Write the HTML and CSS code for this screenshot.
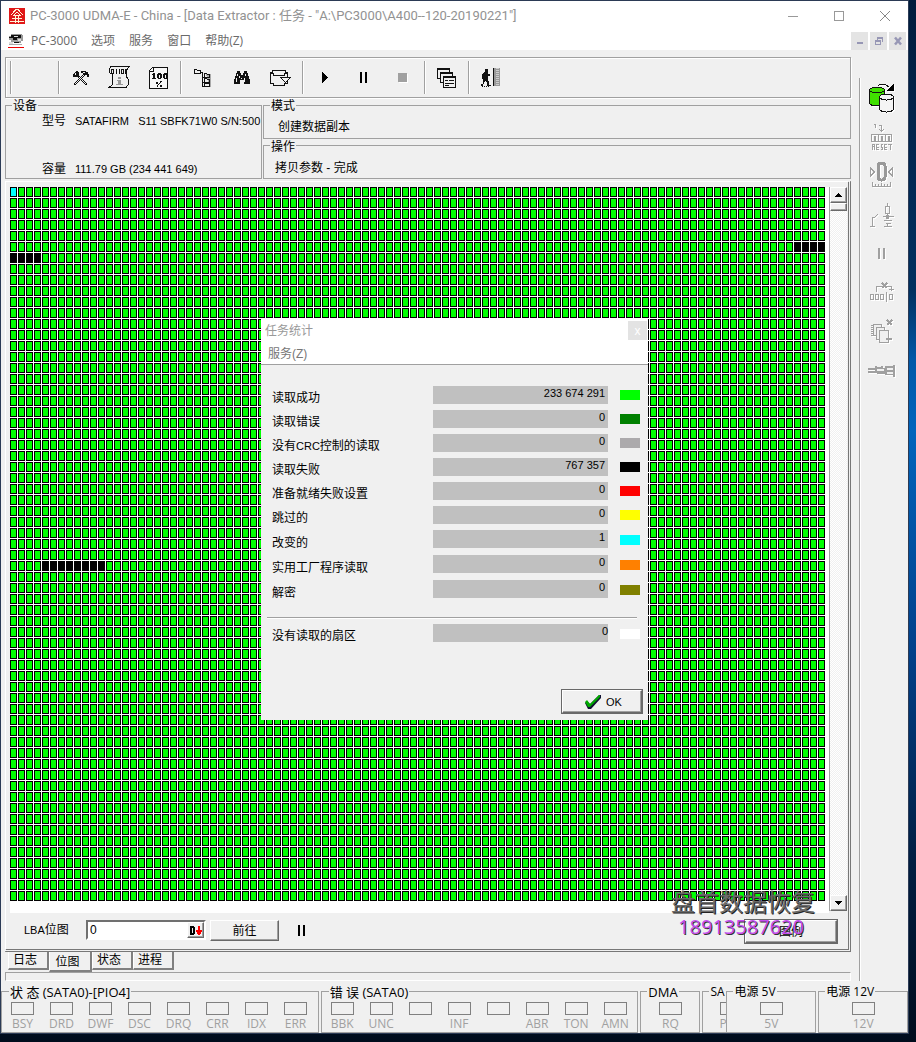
FILE: index.html
```html
<!DOCTYPE html>
<html lang="zh-CN">
<head>
<meta charset="utf-8">
<title>PC-3000 UDMA-E</title>
<link rel="stylesheet" href="styles.css">
</head>
<body>
<div class="window">
  <header class="titlebar">
    <svg class="logo" width="16" height="16" viewBox="0 0 16 16" shape-rendering="crispEdges"><path fill="#e01818" d="M0 0h16v16H0z"/><path fill="none" stroke="#fff5d8" d="M7.500 1L1.500 7.500M8.500 1l6 6.500M8 4L4.500 7.500h7zM3 10.500h10M1 13.500h14M6.500 8v7M9.500 8v7"/></svg>
    <span class="caption">PC-3000 UDMA-E - China - [Data Extractor : 任务 - "A:\PC3000\A400--120-20190221"]</span>
    <div class="winbtns">
      <button aria-label="最小化"><svg width="12" height="12" viewBox="0 0 12 12" shape-rendering="crispEdges"><path stroke="#999" d="M1 6.500h10"/></svg></button>
      <button aria-label="最大化"><svg width="12" height="12" viewBox="0 0 12 12" shape-rendering="crispEdges"><path fill="none" stroke="#999" d="M1.500 1.500h9v9h-9z"/></svg></button>
      <button aria-label="关闭"><svg width="12" height="12" viewBox="0 0 12 12"><path stroke="#888" d="M1 1l10 10M11 1L1 11"/></svg></button>
    </div>
  </header>
  <nav class="menubar">
    <svg width="16" height="14" viewBox="0 0 16 14" shape-rendering="crispEdges"><path fill="#999" d="M3 0h11v1h1v6h-2v2H6V8H3V6H1V2h2z"/><path fill="#111" d="M3 1h10v3H9v2H5V4H1V3h2zM6 8h5v1H6z"/><path fill="#ddd" d="M6 2h4v1H6zM10 5h3v2h-3zM1 8h4v2H1z"/><path fill="#aaa" d="M1 10h13v1H1z"/><path fill="#e00" d="M0 13h16v1H0z"/></svg>
    <button>PC-3000</button><button>选项</button><button>服务</button><button>窗口</button><button>帮助(Z)</button>
    <div class="mdibtns">
      <button aria-label="最小化子窗口"><svg width="10" height="10" viewBox="0 0 10 10" shape-rendering="crispEdges"><path fill="#9797b5" d="M2 6h6v2H2z"/></svg></button>
      <button aria-label="还原子窗口"><svg width="10" height="10" viewBox="0 0 10 10" shape-rendering="crispEdges"><path fill="#9797b5" d="M3 1h6v5H8V3H4v1H3zM1 4h6v5H1zM2 6v2h4V6z" fill-rule="evenodd"/></svg></button>
      <button aria-label="关闭子窗口"><svg width="10" height="10" viewBox="0 0 10 10"><path stroke="#9797b5" stroke-width="2.500" d="M2 1.500l6 7M8 1.500l-6 7"/></svg></button>
    </div>
  </nav>
  <div class="workspace">
    <main class="main">
      <div class="toolbar etched">
        <i class="sep"></i><span class="blank"></span><i class="sep"></i>
        <button aria-label="工具"><svg width="18" height="18" viewBox="0 0 18 18" shape-rendering="crispEdges"><path fill="none" stroke="#111" stroke-width="2" d="M2 16L13 5M4 5l11 11"/><path fill="#111" d="M1 5l3-3 3 1v3L5 8H1zM9 2h5v1h2v2h1v3h-2V6h-4V4H9z"/><path stroke="#f0f0f0" d="M3 15l9-9M7 8l7 7M4 4L3 6M11 3h2"/></svg></button>
        <button aria-label="信息"><svg width="23" height="23" viewBox="0 0 23 23" shape-rendering="crispEdges"><path fill="none" stroke="#111" d="M3 .500h18.500M3 .500L1.500 2.500v4l3 2v10L1 21.500h17l2.500-3v-5L18.500 11V4L21.500.500"/><path fill="none" stroke="#111" d="M3.500 3.500h2v4h-2zM8.500 3v5M11.500 3v5M13.500 3.500h2v4h-2zM17.500 3v5"/><path fill="#999" d="M10 11h3v2h-3zM9 14h4v4h2v1H8v-1h2v-3H9z"/></svg></button>
        <button aria-label="百分比"><svg width="20" height="24" viewBox="0 0 20 24" shape-rendering="crispEdges"><path fill="#f8f8f8" stroke="#111" d="M3.500 1.500h15v21H.500V4.500z"/><path fill="none" stroke="#111" d="M1 5.500h3.500V1"/><path fill="#111" d="M4 7h2v5h1v1H3v-1h1V9H3V8h1zM8 8h1V7h3v1h1v4h-1v1H9v-1H8zm2 1v3h1V9zM14 8h1V7h3v1h1v4h-1v1h-3v-1h-1zm2 1v3h1V9z" fill-rule="evenodd"/><path stroke="#111" stroke-width="1" d="M7 16h2M7 17h2M12.500 15L8 20.500M11 19.500h2M11 20.500h2"/></svg></button>
        <i class="sep"></i>
        <button aria-label="目录树"><svg width="18" height="20" viewBox="0 0 18 20" shape-rendering="crispEdges"><path fill="#aaa" d="M12 6h5v13h-6v-1h5z"/><path fill="none" stroke="#111" d="M.500 1.500h2l1 1h3v3h-6zM6 4.500h2.500v14H11M9 9.500h2M9 14.500h2M10.500 5.500h2l1 1h2v3h-5zM10.500 10.500h2l1 1h2v3h-5zM10.500 15.500h5v3h-5z"/></svg></button>
        <button aria-label="查找"><svg width="18" height="16" viewBox="0 0 18 16" shape-rendering="crispEdges"><path fill="#111" d="M4 1h3v2h1v2h2V3h1V1h3v2h1v3h1v3h1v5h-6v-4H7v4H1V9h1V6h1V3h1z"/><path fill="#f0f0f0" d="M4 4h1v2H4zM3 8h1v4H3zM6 6h1v2H6zM12 4h1v2h-1zM11 8h1v4h-1zM8 8h1v1H8z"/></svg></button>
        <button aria-label="磁盘"><svg width="23" height="18" viewBox="0 0 23 18" shape-rendering="crispEdges"><path fill="none" stroke="#111" d="M18.500 8V3.500H16V1.500H3.500V3.500H1M1.500 3v11H4v2h11v-2h3.500v-2M2 4.500h2v2h11.500v-2H18"/><path fill="#f4f4f4" stroke="#111" d="M11.500 8.500h10L16.500 13.500z"/></svg></button>
        <i class="sep"></i>
        <button aria-label="开始"><svg width="8" height="12" viewBox="0 0 8 12" shape-rendering="crispEdges"><path d="M1 0l6 5.500L1 11z"/></svg></button>
        <button aria-label="暂停"><svg width="8" height="12" viewBox="0 0 8 12"><path d="M0 0h2v11H0zM5 0h2v11H5z"/></svg></button>
        <button aria-label="停止"><svg width="10" height="10" viewBox="0 0 10 10"><path fill="#fff" d="M1 1h9v9H1z"/><path fill="#a0a0a0" d="M0 0h9v9H0z"/></svg></button>
        <i class="sep"></i>
        <button aria-label="窗口列表"><svg width="20" height="22" viewBox="0 0 20 22" shape-rendering="crispEdges"><path fill="#f0f0f0" stroke="#111" d="M.500 1.500h12v10H.500z"/><path fill="#111" d="M1 2h12v1H1z"/><path fill="#f0f0f0" stroke="#111" d="M3.500 5.500h12v10h-12z"/><path fill="#111" d="M3 5h12v2H3z"/><path fill="#f0f0f0" stroke="#111" d="M6.500 9.500h12v11h-12z"/><path fill="#111" d="M6 9h13v2H6zM8 13h3v1H8zM12 13h5v1h-5zM8 16h9v1H8zM8 18h4v1H8z"/></svg></button>
        <i class="sep"></i>
        <button aria-label="退出"><svg width="20" height="20" viewBox="0 0 20 20" shape-rendering="crispEdges"><path fill="#111" d="M4 1h3v3H4zM3 4h4v2h2v2H7v3l1 3v3h2v1H6v-3l-2-2-1 2-1 3H0v-2h2v-4l1-3-2 2V7z"/><path stroke="#111" stroke-dasharray="1 1" d="M1 18.500h8"/><path fill="#999" d="M12 0h7v18h-7z"/><path stroke="#111" d="M12.500 0v18"/><path stroke="#ccc" stroke-width="3" stroke-dasharray="1 1" d="M16.500 0v18"/></svg></button>
      </div>
      <div class="info">
        <fieldset class="group device"><legend>设备</legend>
          <div class="line"><span>型号</span><span class="lat">SATAFIRM &nbsp; S11 SBFK71W0 S/N:500</span></div>
          <div class="line"><span>容量</span><span class="lat">111.79 GB (234 441 649)</span></div>
        </fieldset>
        <div class="stack">
          <fieldset class="group mode"><legend>模式</legend><p>创建数据副本</p></fieldset>
          <fieldset class="group op"><legend>操作</legend><p>拷贝参数 - 完成</p></fieldset>
        </div>
      </div>
      <section class="book">
        <div class="mapview">
          <div class="map">
            <svg class="cells" width="816" height="715" shape-rendering="crispEdges">
              <defs><pattern id="cell" width="8" height="11" patternUnits="userSpaceOnUse"><path fill="#000" d="M0 0h7v10H0z"/><path fill="#0f0" d="M1 1h5v8H1z"/></pattern></defs>
              <path fill="url(#cell)" d="M0 0h816v715H0z"/>
              <path fill="#0ff" d="M1 1h5v8H1z"/>
              <path d="M784 55h7v10h-7zM792 55h7v10h-7zM800 55h7v10h-7zM808 55h7v10h-7zM0 66h7v10H0zM8 66h7v10H8zM16 66h7v10h-7zM24 66h7v10h-7zM32 374h7v10h-7zM40 374h7v10h-7zM48 374h7v10h-7zM56 374h7v10h-7zM64 374h7v10h-7zM72 374h7v10h-7zM80 374h7v10h-7zM88 374h7v10h-7z"/>
            </svg>
          </div>
          <div class="scroll">
            <button class="raised" aria-label="向上"><svg width="7" height="4" viewBox="0 0 7 4" shape-rendering="crispEdges"><path d="M3 0h1v1h1v1h1v1h1v1H0V3h1V2h1V1h1z"/></svg></button>
            <span class="thumb raised"></span>
            <button class="raised down" aria-label="向下"><svg width="7" height="4" viewBox="0 0 7 4" shape-rendering="crispEdges"><path d="M0 0h7v1H6v1H5v1H4v1H3V3H2V2H1V1H0z"/></svg></button>
          </div>
        </div>
        <div class="controls">
          <label for="lba"><span class="lat">LBA</span>位图</label>
          <div class="field"><input id="lba" type="text" value="0"><button class="raised" aria-label="十进制"><svg width="12" height="9" viewBox="0 0 12 9" shape-rendering="crispEdges"><path fill-rule="evenodd" d="M0 0h4v1h1v7H4v1H0zM2 2v5h1V2z"/><path fill="red" d="M8 0h2v4h2v2h-1v2h-1v1H8V8H7V6H6V4h2z"/></svg></button></div>
          <button class="push raised">前往</button>
          <button class="flat" aria-label="暂停"><svg width="8" height="12" viewBox="0 0 8 12"><path d="M0 0h2v11H0zM5 0h2v11H5z"/></svg></button>
          <button class="push raised framed">图例</button>
        </div>
      </section>
      <div class="tabs"><button>日志</button><button class="active">位图</button><button>状态</button><button>进程</button></div>
      <div class="progress"></div>
    </main>
    <aside class="side">
      <button aria-label="数据复制"><svg width="26" height="30" viewBox="0 0 26 30" shape-rendering="crispEdges"><path fill="#40e000" stroke="#111" d="M.500 7.500Q.500 4.500 8 4.500t7.500 3V21q-1 2-7.500 2T.500 20z"/><path fill="none" stroke="#111" d="M.500 7.500q2 2 7.500 2t7.500-2"/><path fill="#f4f4f4" stroke="#111" d="M10.500 14q1-3 7-3t7 3v12q-1 3-7 3t-7-3z"/><path fill="none" stroke="#111" d="M10.500 14q1 3 7 3t7-3M9 2.500Q15-1 20 4"/><path d="M25 0v8h-7z"/></svg></button>
      <button aria-label="复位"><svg width="22" height="27" viewBox="0 0 22 27" shape-rendering="crispEdges"><path fill="none" stroke="#a0a0a0" d="M3 1.500h1.500V5M8 2.500h2.500V8M8 6l2.500 2.500L13 6M.500 11.500h20v7H.500zM7.500 11v8M14.500 11v8M3.500 13h1v4h-1zM10.500 13h1v4h-1zM17.500 13h1v4h-1z"/><path fill="none" stroke="#a0a0a0" d="M1.500 26.500v-5h2v2h-2M3.500 24v2.500M8 21.500H5.500v5H8M6 24h2M12 21.500h-2v2.500h1.500v2.500H9.500M16 21.500h-2.500v5H16M14 24h2M17 21.500h4M19.500 21v5.500"/></svg></button>
      <button aria-label="归零"><svg width="26" height="27" viewBox="0 0 26 27" shape-rendering="crispEdges"><path fill="none" stroke="#a0a0a0" d="M1.500 6v8l4-4zM23.500 6v8l-4-4zM3.500 20v4.500h18V20M6.500 22v2M9.500 22v2M12.500 21v3M15.500 22v2M18.500 22v2"/><rect x="9" y="1" width="7" height="17" rx="3" fill="none" stroke="#999" stroke-width="3"/></svg></button>
      <button aria-label="电路"><svg width="26" height="26" viewBox="0 0 26 26" shape-rendering="crispEdges"><path fill="none" stroke="#a0a0a0" d="M18.500 1v3M16.500 4.500h4v7h-4zM18.500 12v5M14 14.500h11M15 18.500h8M17 21.500h5M18.500 22v3M15 24.500h8M9 12L6 15H3.500v9M1 24.500h5"/><path fill="#a0a0a0" d="M17 13h3v4h-3z"/></svg></button>
      <button aria-label="暂停"><svg width="8" height="12" viewBox="0 0 8 12"><path fill="#a0a0a0" d="M0 0h2v11H0zM5 0h2v11H5z"/></svg></button>
      <button aria-label="跳过块"><svg width="26" height="22" viewBox="0 0 26 22" shape-rendering="crispEdges"><path fill="none" stroke="#a0a0a0" d="M1.500 12.500h3v5h-3zM6.500 12.500h3v5h-3zM11.500 12.500h3v5h-3zM20.500 12.500h3v5h-3zM17.500 10v10M7.500 10V4.500h15V9M20 7.500h5"/><path stroke="#a0a0a0" stroke-width="2" d="M13 1l5 5M18 1l-5 5"/></svg></button>
      <button aria-label="清除副本"><svg width="26" height="26" viewBox="0 0 26 26" shape-rendering="crispEdges"><path fill="#f0f0f0" stroke="#a0a0a0" d="M4.500 5.500h8v11h-8z"/><path fill="#f0f0f0" stroke="#a0a0a0" d="M7.500 8.500h8v12h-8z"/><path fill="#f0f0f0" stroke="#a0a0a0" d="M10.500 11.500h9v12h-9z"/><path stroke="#a0a0a0" stroke-width="2" stroke-dasharray="1 1" d="M3 6v12"/><path stroke="#a0a0a0" stroke-width="2" d="M18 1l5 5M23 1l-5 5M17 20h6"/></svg></button>
      <button aria-label="连接器"><svg width="28" height="14" viewBox="0 0 28 14" shape-rendering="crispEdges"><path fill="#a0a0a0" d="M0 4h7V2h2v1h4V2h2v2h2V2h8V1h2v12h-2v-2h-8v-1H9V9H0V7h7V6H0z"/><path fill="#f0f0f0" d="M9 5h7v2H9zM19 4h6v2h-6zM19 8h6v2h-6z"/></svg></button>
    </aside>
  </div>
  <footer class="status">
    <fieldset class="group bits"><legend>状 态 (SATA0)-[PIO4]</legend><span>BSY</span><span>DRD</span><span>DWF</span><span>DSC</span><span>DRQ</span><span>CRR</span><span>IDX</span><span>ERR</span></fieldset>
    <fieldset class="group bits"><legend>错 误 (SATA0)</legend><span>BBK</span><span>UNC</span><span></span><span>INF</span><span></span><span>ABR</span><span>TON</span><span>AMN</span></fieldset>
    <fieldset class="group dma"><legend>DMA</legend><span>RQ</span></fieldset>
    <fieldset class="group cut"><legend>SA</legend><span>P</span></fieldset>
    <fieldset class="group power"><legend>电源 5V</legend><span>5V</span></fieldset>
    <fieldset class="group power"><legend>电源 12V</legend><span>12V</span></fieldset>
  </footer>

  <section class="dialog" role="dialog" aria-label="任务统计">
    <header><span>任务统计</span><button aria-label="关闭">x</button></header>
    <nav><button>服务(Z)</button></nav>
    <div class="stats">
      <div class="rows">
        <div class="row"><span>读取成功</span><output>233 674 291</output><i class="c-ok"></i></div>
        <div class="row"><span>读取错误</span><output>0</output><i class="c-err"></i></div>
        <div class="row"><span>没有<small>CRC</small>控制的读取</span><output>0</output><i class="c-crc"></i></div>
        <div class="row"><span>读取失败</span><output>767 357</output><i class="c-fail"></i></div>
        <div class="row"><span>准备就绪失败设置</span><output>0</output><i class="c-ready"></i></div>
        <div class="row"><span>跳过的</span><output>0</output><i class="c-skip"></i></div>
      </div>
      <div class="rows wide">
        <div class="row"><span>改变的</span><output>1</output><i class="c-chg"></i></div>
        <div class="row"><span>实用工厂程序读取</span><output>0</output><i class="c-util"></i></div>
        <div class="row"><span>解密</span><output>0</output><i class="c-dec"></i></div>
      </div>
      <hr>
      <div class="row unread"><span>没有读取的扇区</span><output>0</output><i class="c-none"></i></div>
    </div>
    <div class="actions"><button class="push raised framed"><svg width="17" height="16" viewBox="0 0 17 16"><path fill="#113" d="M1 9l2-2 3 3 9-9h2v3L7 15H4z"/><path fill="#0a0" d="M1 8l2-2 3 4 9-9h1v2L6 13H4z"/></svg><span class="lat">OK</span></button></div>
  </section>
  <div class="mark"><span class="mark-name">盘首数据恢复</span><span class="mark-tel">18913587620</span></div>
</div>
</body>
</html>
```

FILE: styles.css
```css
* { box-sizing: border-box; }
body {
  margin: 0;
  padding: 0 7px 8px 0;
  background: linear-gradient(#001c3c 0, #002a57 200px, #00305f 290px, #0058a8 360px, #0064bc 430px, #00408a 650px, #001e42 860px, #000c1c 1042px);
  font: 12px/16px "Liberation Sans", "Noto Sans CJK SC", sans-serif;
  color: #000;
}
button {
  border: 0; padding: 0; margin: 0; background: none;
  font: inherit; color: inherit;
  display: flex; align-items: center; justify-content: center;
}
svg { display: block; flex: none; }
p { margin: 0; }

.window {
  position: relative;
  background: #f0f0f0;
  border: 1px solid #2b3a55;
}
.titlebar, .menubar {
  display: flex; align-items: center;
  background: #fff;
  padding-left: 8px;
  font-family: "Open Sans", "Noto Sans CJK SC", sans-serif;
}
.titlebar { height: 30px; color: #929292; }
.caption { margin-left: 5px; white-space: nowrap; font-family: Roboto, "Noto Sans CJK SC", sans-serif; font-size: 13px; }
.winbtns { display: flex; margin-left: auto; }
.winbtns button { width: 46px; height: 28px; }
.menubar { height: 19px; padding-left: 7px; color: #6a6a6a; }
.menubar > button { margin-left: 7px; margin-right: 7px; }
.mdibtns { display: flex; gap: 2px; margin-left: auto; padding-right: 2px; }
.mdibtns button { width: 17px; height: 18px; background: #e4e4e4; }

.workspace { display: flex; padding: 7px 0 0 4px; }
.main { flex: 1; min-width: 0; }
.etched, .group {
  border: 1px solid #a0a0a0;
  box-shadow: 1px 1px 0 #fff, inset 1px 1px 0 #fff;
}
.group { margin: 0; padding: 0; min-width: 0; box-shadow: none; }
.group legend { padding: 2px 1px 0; margin-left: 6px; line-height: 12px; }

.toolbar { display: flex; align-items: stretch; height: 41px; padding: 3px 2px; }
.toolbar button { width: 39px; }
.blank { width: 43px; }
.sep {
  width: 2px; margin: 0 1px 0 2px;
  border-left: 1px solid #a0a0a0; border-right: 1px solid #fff;
}
.info { display: flex; gap: 1px; height: 81px; }
.device { width: 257px; overflow: hidden; }
.stack { flex: 1; display: flex; flex-direction: column; }
.stack .group { flex: 1; }
.mode p { padding: 7px 14px 0; }
.op p { padding: 7px 11px 0; }
.line { display: flex; gap: 9px; padding-left: 36px; height: 48px; padding-top: 1px; white-space: nowrap; }
.lat, small { font-size: 11px; }

.book {
  margin-top: 2px;
  padding: 5px 1px 0 4px;
  border: 1px solid #fff;
  border-right: 3px double #777;
  border-bottom: 3px double #777;
}
.mapview { display: flex; }
.map { flex: 1; min-width: 0; background: #fff; padding-bottom: 11px; overflow: hidden; }
.scroll {
  width: 18px; margin-bottom: 2px;
  border-left: 1px solid #a0a0a0;
  display: flex; flex-direction: column;
  background: repeating-conic-gradient(#fff 0 25%, #f0f0f0 0 50%) 0 0 / 2px 2px;
}
.raised {
  background: #f0f0f0;
  border: 1px solid #fff;
  border-right-color: #696969; border-bottom-color: #696969;
  box-shadow: inset -1px -1px 0 #a0a0a0;
}
.scroll button { height: 16px; }
.thumb { height: 8px; }
.scroll .down { margin-top: auto; }

.controls { display: flex; align-items: flex-start; height: 36px; padding: 7px 10px 0 14px; }
.controls label { width: 62px; line-height: 20px; }
.field {
  display: flex; width: 120px; height: 20px;
  background: #fff;
  border: 2px solid #707070; border-right-color: #fff; border-bottom-color: #fff;
}
.field input { flex: 1; min-width: 0; border: 0; padding: 0 2px; background: none; font: inherit; outline: 0; }
.field button { width: 17px; }
.push { width: 69px; height: 21px; margin-left: 4px; }
.flat { width: 46px; height: 21px; }
.framed { outline: 1px solid #696969; outline-offset: 0; }
.controls .framed { width: 92px; height: 23px; margin-left: auto; }

.tabs { display: flex; align-items: flex-start; height: 20px; padding-left: 3px; }
.tabs button {
  width: 41px; height: 18px;
  padding-right: 6px;
  border: 1px solid #fff; border-top: 0;
  border-right: 2px solid #808080; border-bottom: 2px solid #808080;
}
.tabs .active { width: 43px; height: 20px; padding: 2px 5px 0 0; background: #f0f0f0; }
.progress { height: 9px; border: 1px solid #a0a0a0; border-right-color: #fff; border-bottom-color: #fff; }

.side {
  width: 49px; margin: 21px 0 0 8px;
  border-left: 1px solid #a0a0a0;
  box-shadow: inset 1px 0 0 #fff;
}
.side button { width: 44px; height: 39px; }
.side svg { filter: drop-shadow(1px 1px 0 #fff); }

.status {
  display: flex; gap: 2px; height: 52px; padding-top: 2px;
  font-family: "Open Sans", "Noto Sans CJK SC", sans-serif;
}
.status .group { display: flex; justify-content: center; flex: 89 1 0; }
.status .bits { flex: 319 1 0; justify-content: flex-start; padding-left: 1px; }
.status .dma { flex: 59 1 0; }
.status .cut { flex: 0 0 24px; justify-content: flex-start; margin-right: -2px; border-right: 0; }
.status legend { padding-top: 2px; line-height: 14px; font-size: 13px; white-space: nowrap; }
.status .power legend { font-size: 12px; }
.status .group span {
  flex: none; width: 39px; height: 31px;
  padding-top: 3px;
  color: #a0a0a0; text-align: center; line-height: 18px;
}
.status span::before {
  content: ""; display: block;
  width: 21px; height: 11px; margin: 0 auto;
  border: 1px solid #808080;
}
.status .cut legend { font-size: 12px; }
.status .cut span { width: 7px; margin-left: 16px; text-align: left; }
.status .cut span::before { width: 6px; margin: 0 0 0 1px; border-right: 0; }

.dialog {
  position: absolute; left: 260px; top: 318px;
  width: 387px; height: 401px;
  background: #f0f0f0;
}
.dialog header {
  display: flex; justify-content: space-between;
  height: 24px; padding: 2px 1px 0 4px;
  background: #fff; color: #999; line-height: 20px;
}
.dialog header button { width: 19px; height: 19px; background: #e3e3e3; color: #fff; }
.dialog nav {
  display: flex; height: 22px; padding-left: 7px;
  background: #fff; color: #777;
  border-bottom: 1px solid #a0a0a0;
}
.stats { padding: 21px 8px 0 11px; }
.rows { display: grid; gap: 6px; margin-bottom: 6px; }
.wide { gap: 7px; margin-bottom: 0; }
.row { display: flex; height: 18px; }
.row span { flex: 1; line-height: 24px; }
.row output {
  width: 175px; padding-right: 3px;
  background: #c0c0c0; text-align: right; font-size: 11px; line-height: 14px;
}
.row i { width: 20px; height: 10px; margin: 4px 0 0 12px; }
.wide i, .unread i { margin-top: 5px; }
.wide span { line-height: 26px; }
.unread output { padding-right: 0; }
.stats hr {
  height: 2px; margin: 19px 3px 5px -5px;
  border: 0; border-top: 1px solid #a0a0a0; border-bottom: 1px solid #fff;
}
.c-ok { background: #0f0; } .c-err { background: #008000; } .c-crc { background: #acaaac; }
.c-fail { background: #000; } .c-ready { background: #f00; } .c-skip { background: #ff0; }
.c-chg { background: #0ff; } .c-util { background: #ff8000; } .c-dec { background: #808000; }
.c-none { background: #fff; }
.actions { display: flex; justify-content: flex-end; padding: 48px 6px 0 0; }
.actions .push { width: 80px; height: 23px; gap: 5px; padding-left: 2px; }

.mark {
  position: absolute; right: 93px; top: 884px;
  display: flex; flex-direction: column; align-items: center;
  pointer-events: none;
}
.mark-name { font: 24px/32px "Noto Sans CJK SC", sans-serif; color: #6a6a6a; text-shadow: 1px 1px 0 #222; }
.mark-tel { margin-right: 4px; font: 20px/20px "Open Sans", sans-serif; color: #c44cf0; text-shadow: 1px 1px 0 #333; }
```
